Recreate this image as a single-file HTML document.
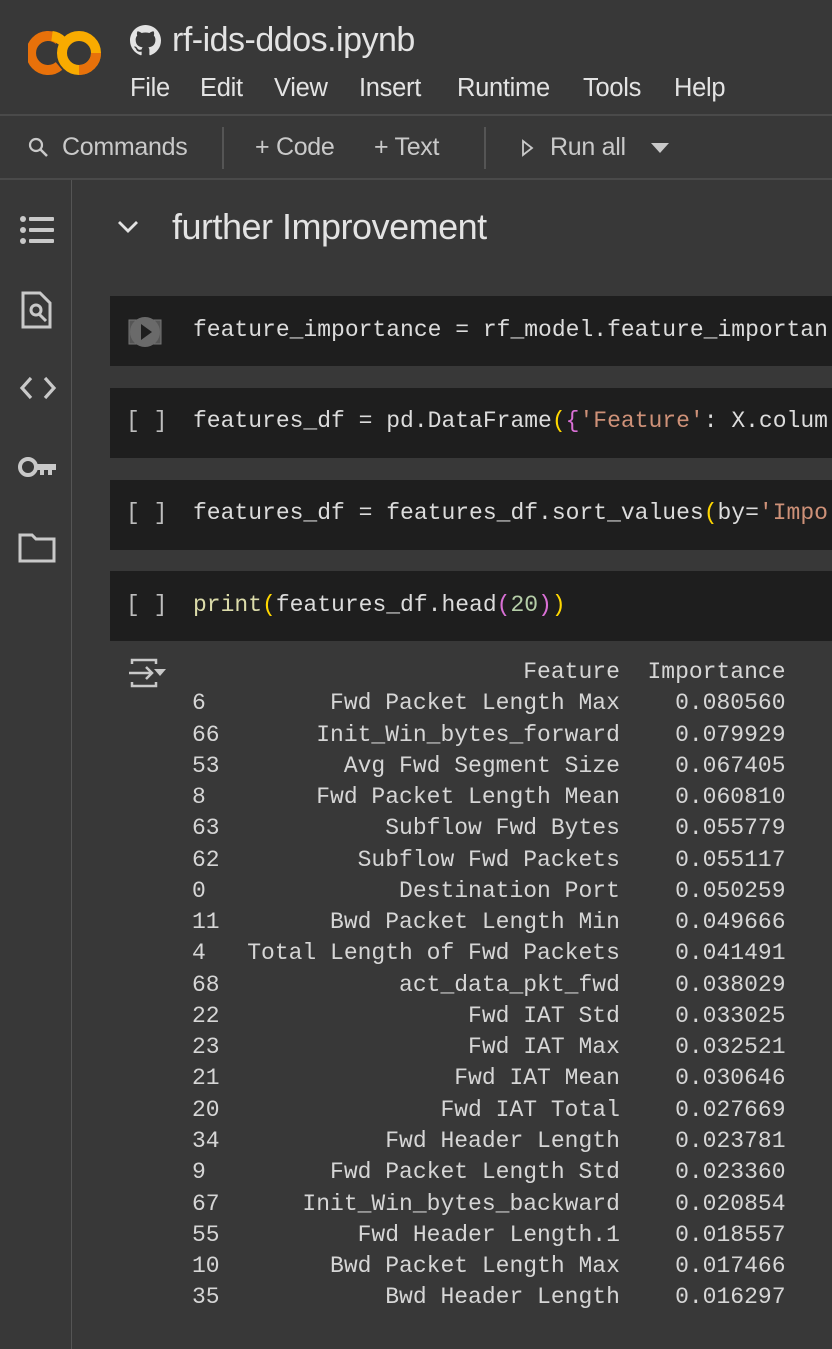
<!DOCTYPE html>
<html><head><meta charset="utf-8"><style>
*{margin:0;padding:0;box-sizing:border-box}
body{width:832px;height:1349px;background:#383838;overflow:hidden;position:relative;font-family:"Liberation Sans",sans-serif;color:#e3e3e3}
.abs{position:absolute}
.title{left:172px;top:21px;font-size:34px;color:#e3e3e3;letter-spacing:-0.5px}
.menu{top:74px;font-size:25.5px;color:#e3e3e3;letter-spacing:-0.3px}
.hr{left:0;width:832px;height:2px;background:#4a4a4a}
.tb{top:133px;font-size:25px;color:#c9c9c9;letter-spacing:-0.3px}
.vsep{top:127px;width:2px;height:42px;background:#555}
.side{left:71px;top:180px;width:1px;height:1169px;background:#555}
.cell{left:110px;width:722px;height:70px;background:#1e1e1e}
.mono{font-family:"Liberation Mono",monospace;font-size:23px;white-space:pre}
.code{left:193px;color:#dcdcdc}
.br{left:126px;color:#bdbdbd}
pre{position:absolute;left:192px;top:657px;font-family:"Liberation Mono",monospace;font-size:23px;line-height:31.26px;color:#d6d6d6}
.s{color:#ce9178}.y{color:#ffd700}.p{color:#da70d6}.n{color:#b5cea8}.f{color:#dcdcaa}
</style></head><body>
<svg class="abs" style="left:28px;top:28px" width="76" height="50" viewBox="0 0 76 50">
<path d="M31 12 A17 17 0 1 0 31 38" fill="none" stroke="#e8710a" stroke-width="10"/>
<path d="M24 8 A17 17 0 0 1 34 13" fill="none" stroke="#f9ab00" stroke-width="10"/>
<circle cx="51" cy="25" r="17" fill="none" stroke="#f9ab00" stroke-width="10"/>
<path d="M51 42 A17 17 0 0 0 68 25" fill="none" stroke="#e8710a" stroke-width="10"/>
</svg>
<svg class="abs" style="left:130px;top:25px" width="31" height="31" viewBox="0 0 16 16"><path fill="#e3e3e3" d="M8 0C3.58 0 0 3.58 0 8c0 3.540 2.29 6.530 5.47 7.590.4.07.55-.17.55-.38 0-.19-.01-.82-.01-1.490-2.010.37-2.530-.49-2.690-.94-.09-.23-.48-.94-.82-1.130-.28-.15-.68-.52-.01-.53.63-.01 1.080.58 1.230.82.72 1.210 1.870.87 2.330.66.07-.52.28-.87.51-1.070-1.780-.2-3.640-.89-3.640-3.950 0-.87.31-1.590.82-2.150-.08-.2-.36-1.020.08-2.120 0 0 .67-.21 2.200.82.64-.18 1.320-.27 2-.27.68 0 1.360.09 2 .27 1.530-1.040 2.200-.82 2.200-.82.44 1.100.16 1.920.08 2.120.51.56.82 1.270.82 2.150 0 3.070-1.870 3.750-3.650 3.950.29.25.54.73.54 1.480 0 1.070-.01 1.930-.01 2.200 0 .21.15.46.55.38A8.013 8.013 0 0016 8c0-4.420-3.580-8-8-8z"/></svg>
<div class="abs title">rf-ids-ddos.ipynb</div>
<div class="abs menu" style="left:130px">File</div>
<div class="abs menu" style="left:200px">Edit</div>
<div class="abs menu" style="left:274px">View</div>
<div class="abs menu" style="left:359px">Insert</div>
<div class="abs menu" style="left:457px">Runtime</div>
<div class="abs menu" style="left:583px">Tools</div>
<div class="abs menu" style="left:674px">Help</div>
<div class="abs hr" style="top:114px"></div>
<svg class="abs" style="left:27px;top:136px" width="24" height="24" viewBox="0 0 24 24"><circle cx="9" cy="9" r="6" fill="none" stroke="#c9c9c9" stroke-width="2.2"/><path d="M13.5 13.5L20 20" stroke="#c9c9c9" stroke-width="2.5"/></svg>
<div class="abs tb" style="left:62px">Commands</div>
<div class="abs vsep" style="left:222px"></div>
<div class="abs tb" style="left:255px">+ Code</div>
<div class="abs tb" style="left:374px">+ Text</div>
<div class="abs vsep" style="left:484px"></div>
<svg class="abs" style="left:520px;top:138px" width="16" height="20" viewBox="0 0 16 20"><path d="M3 3L12 10L3 17Z" fill="none" stroke="#c9c9c9" stroke-width="1.8"/></svg>
<div class="abs tb" style="left:550px">Run all</div>
<svg class="abs" style="left:650px;top:142px" width="20" height="12" viewBox="0 0 20 12"><path d="M1 1H19L10 11Z" fill="#c9c9c9"/></svg>
<div class="abs hr" style="top:178px"></div>
<div class="side abs"></div>
<svg class="abs" style="left:18px;top:214px" width="40" height="32" viewBox="0 0 40 32"><g fill="#c9c9c9"><circle cx="5" cy="5" r="3"/><circle cx="5" cy="16" r="3"/><circle cx="5" cy="27" r="3"/><rect x="11" y="3" width="25" height="4" rx="1"/><rect x="11" y="14" width="25" height="4" rx="1"/><rect x="11" y="25" width="25" height="4" rx="1"/></g></svg>
<svg class="abs" style="left:20px;top:290px" width="34" height="40" viewBox="0 0 34 40"><path d="M3 3H20L30 13V37H3Z" fill="none" stroke="#c9c9c9" stroke-width="3"/><circle cx="16" cy="20" r="5" fill="none" stroke="#c9c9c9" stroke-width="3"/><path d="M19 24L26 31" stroke="#c9c9c9" stroke-width="3"/></svg>
<svg class="abs" style="left:18px;top:374px" width="40" height="28" viewBox="0 0 40 28"><path d="M13 4L4 14L13 24M27 4L36 14L27 24" fill="none" stroke="#c9c9c9" stroke-width="3.2"/></svg>
<svg class="abs" style="left:16px;top:455px" width="42" height="26" viewBox="0 0 42 26"><circle cx="12" cy="12" r="8" fill="none" stroke="#c9c9c9" stroke-width="4"/><path d="M20 9H40V15H36V20H32V15H28V20H24V15H20Z" fill="#c9c9c9"/></svg>
<svg class="abs" style="left:18px;top:532px" width="38" height="32" viewBox="0 0 38 32"><path d="M2 3H14L18 7H36V29H2Z" fill="none" stroke="#c9c9c9" stroke-width="3"/></svg>
<svg class="abs" style="left:116px;top:217px" width="24" height="20" viewBox="0 0 24 20"><path d="M3 5L12 14L21 5" fill="none" stroke="#e3e3e3" stroke-width="2.8"/></svg>
<div class="abs" style="left:172px;top:206px;font-size:36px;color:#e3e3e3;letter-spacing:-0.5px">further Improvement</div>
<div class="abs cell" style="top:296px"></div>
<svg class="abs" style="left:128px;top:315px" width="36" height="34" viewBox="0 0 36 34"><rect x="1" y="5" width="32" height="24" fill="#555" stroke="#777"/><circle cx="17" cy="17" r="15" fill="#6a6a6a"/><path d="M13 9L24 17L13 25Z" fill="#1e1e1e"/></svg>
<div class="abs mono code" style="top:317px">feature_importance = rf_model.feature_importan</div>
<div class="abs cell" style="top:388px"></div>
<div class="abs mono br" style="top:408px">[ ]</div>
<div class="abs mono code" style="top:408px">features_df = pd.DataFrame<span class="y">(</span><span class="p">{</span><span class="s">'Feature'</span>: X.colum</div>
<div class="abs cell" style="top:480px"></div>
<div class="abs mono br" style="top:500px">[ ]</div>
<div class="abs mono code" style="top:500px">features_df = features_df.sort_values<span class="y">(</span>by=<span class="s">'Impo</span></div>
<div class="abs cell" style="top:571px"></div>
<div class="abs mono br" style="top:592px">[ ]</div>
<div class="abs mono code" style="top:592px"><span class="f">print</span><span class="y">(</span>features_df.head<span class="p">(</span><span class="n">20</span><span class="p">)</span><span class="y">)</span></div>
<svg class="abs" style="left:128px;top:656px" width="40" height="34" viewBox="0 0 40 34"><path d="M4 8V4H28V8M4 26V30H28V26" fill="none" stroke="#c9c9c9" stroke-width="2.5"/><path d="M1 17H24M18 11L24 17L18 23" fill="none" stroke="#c9c9c9" stroke-width="2.5"/><path d="M26 13H38L32 20Z" fill="#c9c9c9"/></svg>
<pre>                        Feature  Importance
6         Fwd Packet Length Max    0.080560
66       Init_Win_bytes_forward    0.079929
53         Avg Fwd Segment Size    0.067405
8        Fwd Packet Length Mean    0.060810
63            Subflow Fwd Bytes    0.055779
62          Subflow Fwd Packets    0.055117
0              Destination Port    0.050259
11        Bwd Packet Length Min    0.049666
4   Total Length of Fwd Packets    0.041491
68             act_data_pkt_fwd    0.038029
22                  Fwd IAT Std    0.033025
23                  Fwd IAT Max    0.032521
21                 Fwd IAT Mean    0.030646
20                Fwd IAT Total    0.027669
34            Fwd Header Length    0.023781
9         Fwd Packet Length Std    0.023360
67      Init_Win_bytes_backward    0.020854
55          Fwd Header Length.1    0.018557
10        Bwd Packet Length Max    0.017466
35            Bwd Header Length    0.016297</pre>
</body></html>
